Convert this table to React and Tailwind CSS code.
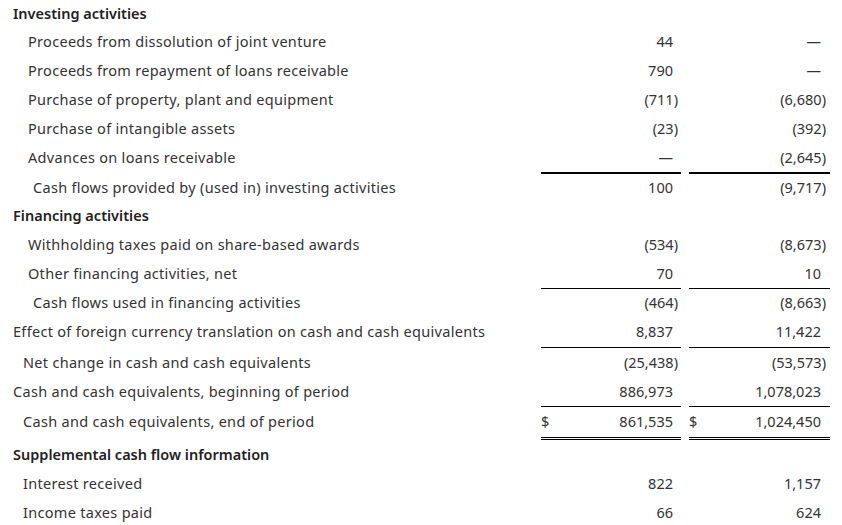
import React from "react";

const rows = [
  { label: "Investing activities", indent: 13, head: true, h: 27 },
  { label: "Proceeds from dissolution of joint venture", indent: 28, a: "44", b: "—" },
  { label: "Proceeds from repayment of loans receivable", indent: 28, a: "790", b: "—" },
  { label: "Purchase of property, plant and equipment", indent: 28, a: "(711)", b: "(6,680)" },
  { label: "Purchase of intangible assets", indent: 28, a: "(23)", b: "(392)" },
  { label: "Advances on loans receivable", indent: 28, a: "—", b: "(2,645)" },
  { label: "Cash flows provided by (used in) investing activities", indent: 33, a: "100", b: "(9,717)", top: "thick" },
  { label: "Financing activities", indent: 13, head: true },
  { label: "Withholding taxes paid on share-based awards", indent: 28, a: "(534)", b: "(8,673)" },
  { label: "Other financing activities, net", indent: 28, a: "70", b: "10" },
  { label: "Cash flows used in financing activities", indent: 33, a: "(464)", b: "(8,663)", top: "thin" },
  { label: "Effect of foreign currency translation on cash and cash equivalents", indent: 13, a: "8,837", b: "11,422", h: 30 },
  { label: "Net change in cash and cash equivalents", indent: 23, a: "(25,438)", b: "(53,573)", top: "thin", h: 30 },
  { label: "Cash and cash equivalents, beginning of period", indent: 13, a: "886,973", b: "1,078,023" },
  { label: "Cash and cash equivalents, end of period", indent: 23, a: "861,535", b: "1,024,450", top: "thin", dollar: true, h: 31, bottom: true },
  { label: "Supplemental cash flow information", indent: 13, head: true },
  { label: "Interest received", indent: 23, a: "822", b: "1,157" },
  { label: "Income taxes paid", indent: 23, a: "66", b: "624" },
];

const labelFont = { fontFamily: "'Noto Sans', Lato, sans-serif" };
const numFont = { fontFamily: "'Noto Sans', 'Open Sans', sans-serif" };

function Num({ v, dollar, top, bottom, pr }) {
  const neg = v && v.startsWith("(");
  const text = neg ? v.slice(0, -1) : v;
  const topCls =
    top === "thick"
      ? "border-t-2 border-black"
      : top === "thin"
      ? "border-t border-black"
      : "";
  const botCls = bottom ? "border-b-[3px] border-double border-black" : "";
  return (
    <div className={`flex items-center ${topCls} ${botCls}`}>
      <div
        className={`flex flex-1 items-center justify-between text-[14.5px] text-[#333] ${pr}`}
        style={numFont}
      >
        <span>{dollar ? "$" : ""}</span>
        <span className="whitespace-nowrap">
          {text}
          {neg ? <span className="mr-[-5px]">)</span> : null}
        </span>
      </div>
    </div>
  );
}

export default function App() {
  return (
    <div className="w-[842px] h-[525px] overflow-hidden bg-white">
      {rows.map((r, i) => (
        <div
          key={i}
          className="grid grid-cols-[1fr_140px_141px] gap-x-2 pr-[12px]"
          style={{ height: (r.h || 29) + (r.bottom ? 3 : 0) }}
        >
          <div
            className={`flex items-center whitespace-nowrap text-[14.5px] ${r.head ? "font-semibold text-[#222]" : "text-[#333] tracking-[0.3px]"}`}
            style={{ ...labelFont, paddingLeft: r.indent, paddingTop: r.top === "thick" ? 2 : r.top === "thin" ? 1 : 0, paddingBottom: r.bottom ? 3 : 0 }}
          >
            {r.label}
          </div>
          {r.head ? (
            <>
              <div />
              <div />
            </>
          ) : (
            <>
              <Num v={r.a} dollar={r.dollar} top={r.top} bottom={r.bottom} pr="pr-[8px]" />
              <Num v={r.b} dollar={r.dollar} top={r.top} bottom={r.bottom} pr="pr-[9px]" />
            </>
          )}
        </div>
      ))}
    </div>
  );
}
